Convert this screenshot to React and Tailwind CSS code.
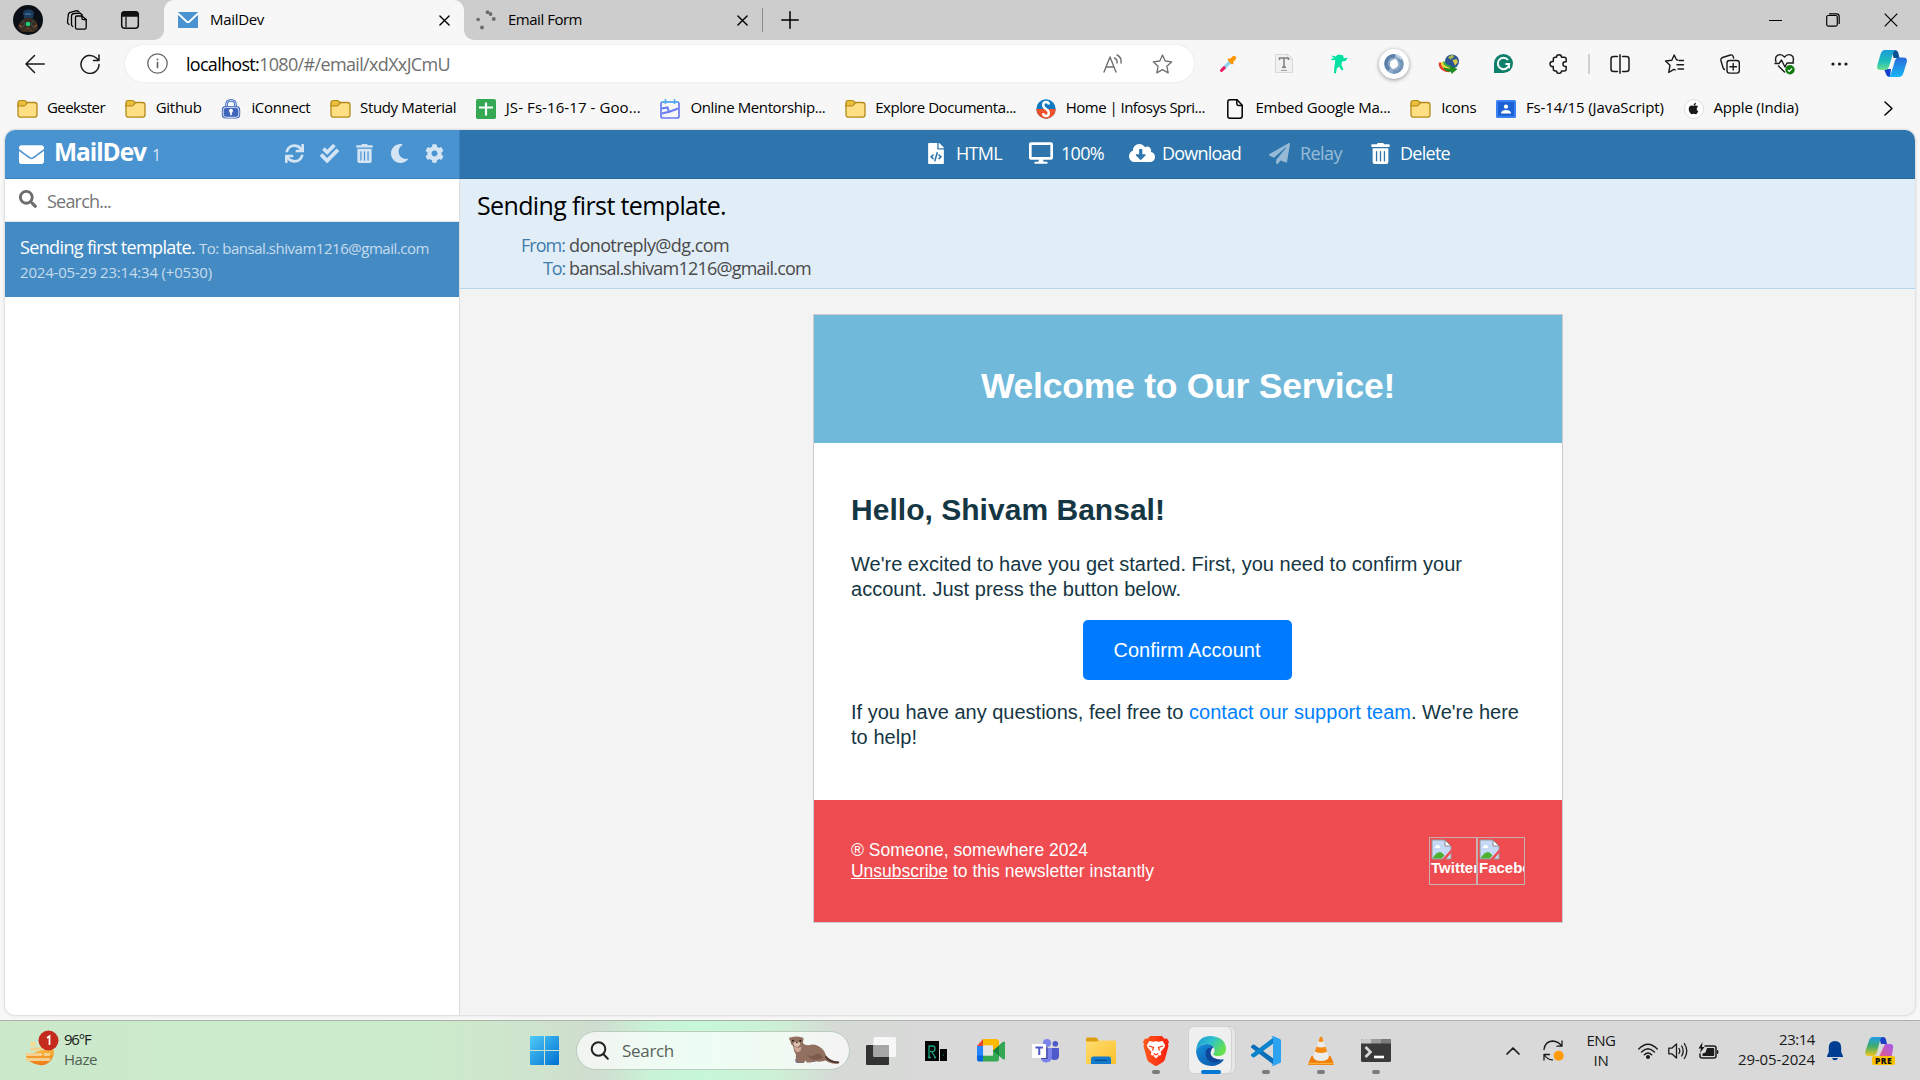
import React, { useLayoutEffect, useRef, useState } from "react";
import {
  FaApple,
  FaCheckDouble,
  FaCloudDownloadAlt,
  FaCog,
  FaDesktop,
  FaEnvelope,
  FaFileCode,
  FaMoon,
  FaPaperPlane,
  FaSearch,
  FaSync,
  FaTrashAlt,
} from "react-icons/fa";

/* A single line of text whose letter spacing is adjusted to fill `w` pixels. */
function Line({ w, className = "", children }) {
  const ref = useRef(null);
  const [style, setStyle] = useState({});
  useLayoutEffect(() => {
    const el = ref.current;
    const natural = el.getBoundingClientRect().width;
    const count = el.textContent.length;
    setStyle({ letterSpacing: `${(w - natural) / count}px`, width: `${w}px` });
  }, [w]);
  return (
    <span ref={ref} style={style} className={`inline-block shrink-0 whitespace-pre ${className}`}>
      {children}
    </span>
  );
}

const stroke = {
  fill: "none",
  stroke: "currentColor",
  strokeWidth: 1.5,
  strokeLinecap: "round",
  strokeLinejoin: "round",
};

/* ---------- browser icons ---------- */

function Avatar() {
  return (
    <svg className="h-[30px] w-[30px]" viewBox="0 0 30 30">
      <circle cx="15" cy="15" r="15" fill="#0b1018" />
      <path d="M10 8c0-4 10-5 11 0l-1 5h-9z" fill="#1c3a5c" />
      <path d="M7 17l5-4h7l5 4 1 7-4 3H9l-4-4z" fill="#3a2c22" />
      <path d="M9 15l3 4-3 4M21 15l-3 4 3 4" stroke="#24584e" fill="none" />
      <path d="M12 9h6" stroke="#3c6fa0" strokeWidth="1.5" />
      <path d="M6 20l3 2M24 20l-3 2" stroke="#a0522d" strokeWidth="1.2" />
      <path d="M12 25l3-2 4 3" stroke="#6a4a28" fill="none" />
      <circle cx="15" cy="19" r="2.2" fill="#1fd07a" />
    </svg>
  );
}

function WorkspacesIcon() {
  return (
    <svg className="h-[22px] w-[22px]" viewBox="0 0 22 22" {...stroke} strokeWidth="1.3">
      <path d="M9.500 8.200 q0-1.200 1.200-1.200 h5.200l4.300 3.600v7.800q0 1.800-1.800 1.800h-7.100q-1.800 0-1.800-1.800z" />
      <path d="M15.900 7v2.300q0 1.400 1.400 1.400h2.900" />
      <path d="M6.800 17.500q-1.300-.5-1.300-2V7.200q0-2.600 2.600-2.700l6.200-.3 2 1.800" />
      <path d="M3 15.500q-1.600-.8-1.500-2.500l.8-7.200q.3-2.300 2.700-2.600l5.800-1.600 2.200 1.300" />
    </svg>
  );
}

function TabActionsIcon() {
  return (
    <svg className="h-5 w-5" viewBox="0 0 20 20">
      <rect x="1.700" y="1.700" width="16.600" height="16.600" rx="3" fill="none" stroke="#111" strokeWidth="1.500" />
      <path d="M1.500 6.800V4q0-2.700 2.700-2.700h11.600q2.700 0 2.700 2.700v2.800z" fill="#111" />
      <path d="M6 6.500v11" stroke="#111" strokeWidth="1.300" />
    </svg>
  );
}

function Cross({ className }) {
  return (
    <svg className={className} viewBox="0 0 12 12" {...stroke}>
      <path d="M1 1l10 10M11 1L1 11" />
    </svg>
  );
}

function FolderIcon() {
  return (
    <svg className="h-5 w-[21px] shrink-0" viewBox="0 0 21 20">
      <rect x="1" y="3.500" width="19" height="14.700" rx="2.500" fill="#ffdf84" stroke="#b38a1a" strokeWidth="1.300" />
      <path d="M1 7V3.800Q1 1.500 3.200 1.500h4q1 0 1.800 1l1.200 1.400L8.600 6Q8 6.800 7 6.800z" fill="#eabf3c" stroke="#b38a1a" strokeWidth="1.200" />
    </svg>
  );
}

function LockIcon() {
  return (
    <svg className="h-5 w-5 shrink-0" viewBox="0 0 20 20">
      <path d="M5.500 9V6q0-4.600 4.500-4.600T14.500 6v3" fill="none" stroke="#4a72bd" strokeWidth="2.800" />
      <path d="M5.500 9V6q0-4.600 4.500-4.600T14.500 6v3" fill="none" stroke="#b9cdf0" strokeWidth="1" />
      <rect x="0.800" y="7" width="18.400" height="12.500" rx="4" fill="#3f66ba" />
      <rect x="2.200" y="8.300" width="15.600" height="10" rx="3" fill="none" stroke="#dbe6fa" strokeWidth="1" />
      <circle cx="10" cy="11.800" r="2" fill="#fff" />
      <path d="M9.200 12h1.600v4.300H9.200z" fill="#fff" />
    </svg>
  );
}

function SheetIcon() {
  return (
    <svg className="h-5 w-5 shrink-0" viewBox="0 0 20 20">
      <rect width="20" height="20" rx="1.800" fill="#34a853" />
      <path d="M10 3.500v13M3 8.500h14" stroke="#fff" strokeWidth="2.200" />
    </svg>
  );
}

function CalendarIcon() {
  return (
    <svg className="h-5 w-5 shrink-0" viewBox="0 0 20 20" fill="none" stroke="#6a7cf5" strokeWidth="1.700">
      <rect x="1" y="3" width="18" height="16" rx="2" />
      <path d="M1.500 3h17" stroke="#5aaef0" />
      <path d="M5.500 0v5M14.500 0v5" stroke="#5aaef0" />
      <path d="M1.500 9.500l6-1 1.500 4.500 9-3.500M2 14.500l6-1.500" strokeWidth="2" />
    </svg>
  );
}

function InfosysIcon() {
  return (
    <svg className="h-5 w-5 shrink-0" viewBox="0 0 20 20">
      <circle cx="10" cy="10" r="9.700" fill="#1278c2" />
      <path d="M.3 10a9.700 9.700 0 0 0 19.400 0z" fill="#f0512a" />
      <path d="M13 5.500Q12.500 3 10 3 7.200 3 7.200 6q0 2.300 2.800 4t2.800 4q0 3-2.800 3-2.600 0-3-2.700" fill="none" stroke="#fff" strokeWidth="2.400" />
    </svg>
  );
}

function PageIcon() {
  return (
    <svg className="h-5 w-4 shrink-0" viewBox="0 0 16 20" {...stroke}>
      <path d="M3 .8h7l5.200 5.400V17q0 2.200-2.200 2.200H3Q.8 19.200.8 17V3Q.8.800 3 .800z" />
      <path d="M9.800 1v3.700q0 1.700 1.700 1.700h3.500" />
    </svg>
  );
}

function ClassroomIcon() {
  return (
    <svg className="h-5 w-5 shrink-0" viewBox="0 0 20 20">
      <rect y="1" width="20" height="18" rx="1.500" fill="#3b80f2" />
      <rect x="2" y="3" width="16" height="14" fill="#1b62d6" />
      <circle cx="10" cy="7.700" r="2.100" fill="#fff" />
      <path d="M5 14.500q0-3.600 5-3.600t5 3.600z" fill="#fff" />
    </svg>
  );
}

function AppleBadge() {
  return (
    <span className="flex h-5 w-5 shrink-0 items-center justify-center rounded-full border border-[#dedede] bg-white">
      <FaApple className="h-[13px] w-[13px] text-[#1a1a1a]" />
    </span>
  );
}

function Eyedropper() {
  return (
    <svg className="h-[17px] w-[17px]" viewBox="0 0 18 18">
      <path d="M2.500 15.500L11 7" stroke="#8fd0f5" strokeWidth="3.600" />
      <path d="M1.600 16.400L4.300 13.700" stroke="#f0185f" strokeWidth="3.200" strokeLinecap="round" />
      <path d="M9.500 5l3.500 3.500" stroke="#fb8c00" strokeWidth="2.600" strokeLinecap="round" />
      <path d="M11.800 6.200l3-3" stroke="#ff9800" strokeWidth="4.600" strokeLinecap="round" />
    </svg>
  );
}

function TextDocIcon() {
  return (
    <svg className="h-[19px] w-[18px]" viewBox="0 0 18 19">
      <path d="M.5.500h12L17.500 5v13.500H.500z" fill="#f1f1f1" stroke="#d8d8d8" />
      <path d="M12.500.500V5h5z" fill="#fff" stroke="#cfcfcf" strokeWidth=".8" />
      <path d="M4.500 6V4h9v2M9 4v9M7 13.200h4" fill="none" stroke="#7d7d7d" strokeWidth="1.500" />
      <path d="M6 16.400h6" stroke="#a8a8a8" strokeWidth="1.200" />
    </svg>
  );
}

function DancerIcon() {
  return (
    <svg className="h-[20px] w-[18px]" viewBox="0 0 18 20" fill="#00e0a0">
      <path d="M1 1.500l4.500 1L8 .5l5 .8.800 3 4-.5-2.200 3.300-3.600.5-.5 3.400 2 4.500-1.800 1-2.700-4-2.300 2.200-.7 4.800-2-.4.300-6L5 9.500 5.200 6 1.800 6.200 1 4.700l3.200-.5z" />
    </svg>
  );
}

function SwirlIcon() {
  return (
    <span className="flex h-[30px] w-[30px] items-center justify-center rounded-full bg-white shadow-[0_1px_4px_rgba(0,0,0,0.4)]">
      <svg className="h-5 w-5" viewBox="0 0 20 20" fill="none">
        <circle cx="10" cy="10" r="7" stroke="#8fabc9" strokeWidth="5.800" />
        <path d="M11 2.200a7.400 7.400 0 0 0-6 13.100" stroke="#5a80a8" strokeWidth="3.400" />
        <path d="M9 17.800a7.400 7.400 0 0 0 6-13.100" stroke="#7394b8" strokeWidth="3" />
        <path d="M12 1.200a9 9 0 0 1 5.500 4" stroke="#c4d3e4" strokeWidth="2" />
        <ellipse cx="10" cy="10" rx="3" ry="5.200" transform="rotate(15 10 10)" fill="#fff" />
      </svg>
    </span>
  );
}

function IdmIcon() {
  return (
    <svg className="h-5 w-[21px]" viewBox="0 0 21 20">
      <circle cx="14" cy="7.500" r="7" fill="#2c568f" />
      <path d="M10 3.500q2-3 5-2.500l1 2-3.500 2.500z" fill="#a9b94e" />
      <path d="M14.500 6l4-1 1.500 3-3 3.500z" fill="#d7c94a" />
      <path d="M2 8.500q-.5 8 9.500 8.500" fill="none" stroke="#e23d28" strokeWidth="2.500" />
      <path d="M4 8q0 6 8.500 7" fill="none" stroke="#f6d423" strokeWidth="2.200" />
      <path d="M6 7.500q0 4 6.500 5" fill="none" stroke="#3bab3a" strokeWidth="2" />
      <path d="M5 13.500l7 1.200.5-2.700 7 3L13.500 20l-.5-2.300q-6 .3-8-4.200z" fill="#1f8a1f" />
    </svg>
  );
}

function GrammarlyIcon() {
  return (
    <svg className="h-[19px] w-[19px]" viewBox="0 0 20 20">
      <path d="M10 0a10 10 0 1 1 0 20H0V10A10 10 0 0 1 10 0z" fill="#0f806c" />
      <path d="M14.800 6.300A6 6 0 1 0 16 10.600h-4M15.800 11v4" fill="none" stroke="#fff" strokeWidth="2" />
    </svg>
  );
}

function PuzzleIcon() {
  return (
    <svg className="h-5 w-5" viewBox="0 0 20 20" {...stroke}>
      <path d="M7.500 3.300a2.500 2.500 0 0 1 5 0h2.700q2 0 2 2v2.500h-1a2.300 2.300 0 0 0 0 4.600h1v2.500q0 2-2 2h-2.700a2.500 2.500 0 0 1-5 0H6.300q-2 0-2-2v-2.300h-.8a2.500 2.500 0 0 1 0-5h.8V5.300q0-2 2-2z" />
    </svg>
  );
}

function SplitIcon() {
  return (
    <svg className="h-5 w-5" viewBox="0 0 20 20" {...stroke}>
      <path d="M7.500 2.500h-4Q1 2.500 1 5v10q0 2.500 2.500 2.500h4M12.500 2.500h4Q19 2.500 19 5v10q0 2.500-2.500 2.500h-4M10 .8v18.400" />
    </svg>
  );
}

function FavoritesIcon() {
  return (
    <svg className="h-5 w-[21px]" viewBox="0 0 20 20" {...stroke} strokeWidth="1.400">
      <path d="M13 6l-1-.2L9.700 1 7.300 6.200 1 7l4.500 4.300-1.300 7L9.500 15.300l1.200.6M14.500 6.500H19M12.500 10.700H19M13.500 15H19" />
    </svg>
  );
}

function CollectionsIcon() {
  return (
    <svg className="h-5 w-5" viewBox="0 0 20 20" {...stroke} strokeWidth="1.400">
      <rect x="7" y="6.500" width="12.300" height="12.600" rx="2.600" />
      <path d="M13.200 9.500v6.600M9.900 12.800h6.600" />
      <path d="M4.500 15.500Q3.300 15 3 13.500L.9 6.500Q.5 4.300 2.500 3.500l8-2.500q2-.5 2.700 1.500l.4 1.500" />
    </svg>
  );
}

function HeartIcon() {
  return (
    <svg className="h-[22px] w-[21px]" viewBox="0 0 21 22">
      <g {...stroke} strokeWidth="1.400">
        <path d="M2 9Q.5 4 3.800 2.200 7.500.5 10.500 4q3-3.500 6.700-1.800Q20.500 4 19 9" />
        <path d="M1 10.500h4l2.500-3.500 3.500 7 2-4h6.500M4.500 13l6 6" />
      </g>
      <circle cx="16" cy="16.700" r="4.700" fill="#0f7b0f" />
      <path d="M13.800 16.800l1.500 1.500 2.800-3" fill="none" stroke="#fff" strokeWidth="1.200" />
    </svg>
  );
}

function CopilotIcon() {
  return (
    <svg className="h-[27px] w-[30px]" viewBox="0 0 30 27">
      <defs>
        <linearGradient id="cpA" x1="0" y1="0" x2="0" y2="1">
          <stop offset="0" stopColor="#1a9bd8" />
          <stop offset=".6" stopColor="#1fc0b8" />
          <stop offset="1" stopColor="#6fe08c" />
        </linearGradient>
        <linearGradient id="cpB" x1="0" y1="0" x2="0" y2="1">
          <stop offset="0" stopColor="#2b6ad8" />
          <stop offset="1" stopColor="#17b6f6" />
        </linearGradient>
      </defs>
      <path d="M15 0h3q2.500 0 3.200 2.500l1.300 5.500h-6z" fill="#0b5394" />
      <path d="M7 19h7l-1 8q-3 0-4-3z" fill="#1440d0" />
      <path d="M8 0h11q-2 0-3 3.500l-4 13Q11 20 8 20H3.500Q-1 20 .4 15L3.600 4Q4.800 0 8 0z" fill="url(#cpA)" />
      <path d="M22 27H11q2 0 3-3.500l4-13Q19 7.500 22 7.500h4.500q4.500 0 3.100 5L26.400 23Q25.200 27 22 27z" fill="url(#cpB)" />
    </svg>
  );
}

/* ---------- browser chrome ---------- */

function TabStrip() {
  return (
    <div className="flex h-10 bg-[#cdcdcd]">
      <div className="flex w-[154px] items-center pl-[13px]">
        <Avatar />
        <span className="ml-[23px]"><WorkspacesIcon /></span>
        <span className="ml-[32px]"><TabActionsIcon /></span>
      </div>
      <div className="flex w-[10px] items-end bg-[#f7f7f7]"><span className="h-10 w-[10px] rounded-br-[10px] bg-[#cdcdcd]" /></div>
      <div className="bg-[#cdcdcd]">
        <div className="flex h-10 w-[300px] items-center rounded-t-[10px] bg-[#f7f7f7] pl-[14px] pr-[14px]">
          <svg className="h-4 w-5" viewBox="0 0 20 16">
            <rect width="20" height="16" rx="1" fill="#4a93d1" />
            <path d="M0 1.500l8.500 8q1.500 1.300 3 0l8.500-8" fill="none" stroke="#fff" strokeWidth="1.800" />
          </svg>
          <Line w={54} className="ml-3 pb-[2px] text-[15px] leading-5 text-black">MailDev</Line>
          <Cross className="ml-auto h-[11px] w-[11px]" />
        </div>
      </div>
      <div className="flex flex-1 bg-[#f7f7f7]">
        <div className="flex flex-1 items-center rounded-bl-[10px] bg-[#cdcdcd] pl-[12px]">
          <svg className="h-5 w-5" viewBox="0 0 20 20" fill="#6b6b6b">
            <circle cx="2.200" cy="9.500" r="1.800" />
            <circle cx="11.500" cy="2.200" r="1.900" />
            <circle cx="14.500" cy="4" r="1.900" />
            <circle cx="17.800" cy="9" r="1.900" />
            <circle cx="6" cy="17.500" r="1.900" />
          </svg>
          <Line w={74} className="ml-[12px] pb-[2px] text-[15px] leading-5 text-black">Email Form</Line>
          <Cross className="ml-[155px] h-[11px] w-[11px]" />
          <span className="ml-[14px] h-6 w-px bg-[#8a8a8a]" />
          <svg className="ml-[18px] h-[18px] w-[18px]" viewBox="0 0 18 18" {...stroke}>
            <path d="M9 .8v16.400M.8 9h16.400" />
          </svg>
          <div className="ml-auto flex items-center pr-[22px] text-black">
            <span className="h-px w-[13px] bg-black" />
            <svg className="ml-[44px] h-[14px] w-[14px]" viewBox="0 0 14 14" fill="none" stroke="currentColor" strokeWidth="1.200">
              <rect x=".7" y="2.500" width="10.600" height="10.600" rx="1.500" />
              <path d="M3 .800h7.500Q13.200.800 13.200 3.500V11" />
            </svg>
            <svg className="ml-[44px] h-[14px] w-[14px]" viewBox="0 0 14 14" fill="none" stroke="currentColor" strokeWidth="1.200">
              <path d="M.7.700l12.600 12.600M13.300.700L.700 13.300" />
            </svg>
          </div>
        </div>
      </div>
    </div>
  );
}

const extensions = [Eyedropper, TextDocIcon, DancerIcon, SwirlIcon, IdmIcon, GrammarlyIcon, PuzzleIcon];

function Slot({ children }) {
  return <span className="flex w-[55px] shrink-0 items-center justify-center">{children}</span>;
}

function AddressRow() {
  return (
    <div className="flex h-[47px] items-center text-[#1a1a1a]">
      <svg className="ml-[25px] h-5 w-5" viewBox="0 0 20 20" {...stroke}>
        <path d="M19.200 10H1M9.500 1.500L1 10l8.500 8.500" />
      </svg>
      <svg className="ml-[35px] h-5 w-5" viewBox="0 0 20 20" {...stroke}>
        <path d="M19 10.500A9 9 0 1 1 16 3.700L18.500 6M19 1v5.500h-5.500" />
      </svg>
      <div className="ml-[25px] flex h-[37px] w-[1069px] items-center rounded-full bg-white pl-[22px] shadow-[0_0_3px_rgba(0,0,0,0.08)]">
        <svg className="h-[21px] w-[21px] text-[#666]" viewBox="0 0 21 21" {...stroke} strokeWidth="1.300">
          <circle cx="10.500" cy="10.500" r="9.700" />
          <path d="M10.500 9.500v5M10.500 6.300v.3" strokeWidth="1.700" />
        </svg>
        <span className="ml-[18px] flex text-lg leading-6">
          <Line w={73} className="text-black">localhost:</Line>
          <Line w={191} className="text-[#6f6f6f]">1080/#/email/xdXxJCmU</Line>
        </span>
        <svg className="ml-auto h-[19px] w-5 text-[#6f6f6f]" viewBox="0 0 20 19" {...stroke} strokeWidth="1.400">
          <path d="M1 18L7 3l6 15M3 13h8M11.500 4q3 1.500 2.500 5M14 1q5 2.500 4 8" />
        </svg>
        <svg className="mr-[21px] ml-[29px] h-5 w-[21px] text-[#6f6f6f]" viewBox="0 0 21 20" {...stroke} strokeWidth="1.300">
          <path d="M10.500 1l2.700 6 6.600.8-4.900 4.500 1.300 6.600-5.700-3.300-5.700 3.300 1.300-6.600L1.200 7.800l6.600-.8z" />
        </svg>
      </div>
      <div className="ml-[7px] flex items-center">
        {extensions.map((Icon, i) => (
          <Slot key={i}><Icon /></Slot>
        ))}
        <span className="mr-[2px] ml-[2px] h-5 w-[2px] bg-[#d0d0d0]" />
        <Slot><SplitIcon /></Slot>
        <Slot><FavoritesIcon /></Slot>
        <Slot><CollectionsIcon /></Slot>
        <Slot><HeartIcon /></Slot>
        <Slot>
          <svg className="h-1 w-[17px]" viewBox="0 0 17 4" fill="#1a1a1a">
            <circle cx="2" cy="2" r="1.600" />
            <circle cx="8.500" cy="2" r="1.600" />
            <circle cx="15" cy="2" r="1.600" />
          </svg>
        </Slot>
        <span className="ml-[10px]"><CopilotIcon /></span>
      </div>
    </div>
  );
}

const bookmarks = [
  [FolderIcon, "Geekster", 58, "gap-[9px]"],
  [FolderIcon, "Github", 46, "gap-[10px]"],
  [LockIcon, "iConnect", 59, "gap-[10px]"],
  [FolderIcon, "Study Material", 96, "gap-[9px]"],
  [SheetIcon, "JS- Fs-16-17 - Goo...", 135, "gap-[10px]"],
  [CalendarIcon, "Online Mentorship...", 135, "gap-[10px]"],
  [FolderIcon, "Explore Documenta...", 141, "gap-[9px]"],
  [InfosysIcon, "Home | Infosys Spri...", 139, "gap-[10px]"],
  [PageIcon, "Embed Google Ma...", 135, "gap-[13px] pl-[2px]"],
  [FolderIcon, "Icons", 35, "gap-[10px]"],
  [ClassroomIcon, "Fs-14/15 (JavaScript)", 138, "gap-[10px]"],
  [AppleBadge, "Apple (India)", 85, "gap-[10px]"],
];

function BookmarksBar() {
  return (
    <div className="flex h-[43px] items-center gap-[19.7px] pl-[17px] text-black">
      {bookmarks.map(([Icon, label, w, gap]) => (
        <span key={label} className={`flex items-center ${gap}`}>
          <Icon />
          <Line w={w} className="pb-[3px] text-[15px] leading-5">{label}</Line>
        </span>
      ))}
      <svg className="mr-[27px] ml-auto h-[15px] w-[9px]" viewBox="0 0 9 15" {...stroke}>
        <path d="M1 1l7 6.500L1 14" />
      </svg>
    </div>
  );
}

/* ---------- MailDev ---------- */

function Sidebar() {
  return (
    <aside className="flex w-[455px] shrink-0 flex-col border-r border-[#dcdcdc] bg-white">
      <header className="-mr-px flex h-[49px] items-center border-r border-b border-[#3a82bf] bg-[#4a93d1] pl-[14px] text-white">
        <FaEnvelope className="h-[25px] w-[25px]" />
        <Line w={92} className="ml-[10px] pb-[4px] text-[24.5px] leading-8 font-bold">MailDev</Line>
        <Line w={7} className="ml-[6px] pt-[2px] text-[16px] leading-5 text-[#d3e5f5]">1</Line>
        <span className="ml-auto flex items-center pr-[15px] pb-px text-[#d3e5f5]">
          <FaSync className="h-[19px] w-[19px]" />
          <FaCheckDouble className="ml-4 h-[19px] w-[19px]" />
          <FaTrashAlt className="ml-4 h-[19px] w-[19px]" />
          <FaMoon className="ml-4 h-[19px] w-[19px]" />
          <FaCog className="ml-4 h-[19px] w-[19px]" />
        </span>
      </header>
      <div className="flex h-[43px] items-center border-b border-[#e3e3e3] pl-[14px]">
        <FaSearch className="mb-[3px] h-[18px] w-[18px] text-[#6c6c6c]" />
        <Line w={64} className="ml-[10px] pt-[2px] text-[18px] leading-6 text-[#757575]">Search...</Line>
      </div>
      <div className="h-[75px] bg-[#458bc3] pt-[13px] pl-[15px]">
        <div className="flex items-baseline leading-6">
          <Line w={175} className="text-[18px] text-white">Sending first template.</Line>
          <Line w={230} className="ml-[4px] text-[15px] text-[#c5dcee]">To: bansal.shivam1216@gmail.com</Line>
        </div>
        <Line w={192} className="-mt-px text-[15px] leading-6 text-[#c5dcee]">2024-05-29 23:14:34 (+0530)</Line>
      </div>
    </aside>
  );
}

function BrokenImage({ alt }) {
  return (
    <span className="flex h-12 w-12 flex-col overflow-hidden border border-[#c9b0b0] pt-px pl-px">
      <svg className="h-[21px] w-[21px] shrink-0" viewBox="0 0 21 21">
        <path d="M1 1h13l6 6v13H1z" fill="#c6d9f7" stroke="#9a9a9a" strokeWidth="1" />
        <path d="M14 1v6h6z" fill="#fff" stroke="#8a8a8a" strokeWidth="1" />
        <path d="M4 9q0-3 3-3 2 0 2 3z" fill="#fff" />
        <path d="M1.500 19.500q5-8 9-6l3 3-3 3z" fill="#4caf2e" />
        <path d="M11 20.500L20.500 10v3.500L14.500 20.500z" fill="#ee4c50" />
      </svg>
      <span className="-mt-[2px] text-[15px] leading-5 font-bold whitespace-nowrap">{alt}</span>
    </span>
  );
}

function EmailPreview() {
  return (
    <div className="mt-[25px] ml-[353px] w-[750px] border border-[#cccccc] bg-white font-['Liberation_Sans',Arial,sans-serif] text-[#153643]">
      <div className="flex h-[128px] justify-center bg-[#70b9da] pt-[48px] text-white">
        <Line w={414} className="text-[35.5px] leading-[46px] font-bold">Welcome to Our Service!</Line>
      </div>
      <div className="h-[357px] px-[37px] pt-[48px]">
        <Line w={314} className="text-[30px] leading-[38px] font-bold">Hello, Shivam Bansal!</Line>
        <p className="mt-[23px] text-[20px] leading-[25px]">
          <Line w={611}>We're excited to have you get started. First, you need to confirm your</Line>
          <Line w={330}>account. Just press the button below.</Line>
        </p>
        <div className="mt-[18px] mr-[2px] flex justify-center">
          <span className="flex h-[60px] w-[209px] items-center justify-center rounded-[5px] bg-[#007bff] text-white">
            <Line w={147} className="text-[20px] leading-6">Confirm Account</Line>
          </span>
        </div>
        <p className="mt-[20px] text-[20px] leading-[25px]">
          <Line w={338}>If you have any questions, feel free to </Line>
          <Line w={222} className="text-[#0080ff]">contact our support team</Line>
          <Line w={108}>. We're here</Line>
          <br />
          <Line w={66}>to help!</Line>
        </p>
      </div>
      <div className="flex h-[122px] items-center bg-[#ee4c50] px-[37px] text-white">
        <div className="flex-1 text-[17.5px] leading-[21px]">
          <Line w={237}>® Someone, somewhere 2024</Line>
          <div className="flex">
            <Line w={97} className="underline">Unsubscribe</Line>
            <Line w={206}> to this newsletter instantly</Line>
          </div>
        </div>
        <div className="flex">
          <BrokenImage alt="Twitter" />
          <BrokenImage alt="Facebook" />
        </div>
      </div>
    </div>
  );
}

function Mail() {
  return (
    <div className="mx-[5px] flex h-[885px] overflow-hidden rounded-[10px] bg-[#f3f3f3] shadow-[0_0_3px_rgba(0,0,0,0.25)]">
      <Sidebar />
      <main className="min-w-0 flex-1">
        <header className="flex h-[49px] items-center border-b border-[#2a699c] bg-[#2d75ac] pb-[2px] pl-[467px] text-[18px] leading-6 text-white">
          <FaFileCode className="h-[21px] w-[18px]" />
          <Line w={46} className="ml-[11px]">HTML</Line>
          <FaDesktop className="ml-[27px] h-[24px] w-[24px]" />
          <Line w={43} className="ml-[8px]">100%</Line>
          <FaCloudDownloadAlt className="ml-[25px] h-[26px] w-[26px]" />
          <Line w={79} className="ml-[7px]">Download</Line>
          <span className="flex items-center opacity-50">
            <FaPaperPlane className="ml-[28px] h-[21px] w-[21px]" />
            <Line w={42} className="ml-[10px]">Relay</Line>
          </span>
          <FaTrashAlt className="ml-[28px] h-[21px] w-[21px]" />
          <Line w={50} className="ml-[9px]">Delete</Line>
        </header>
        <section className="h-[110px] border-b border-[#b5d5ec] bg-[#e1edf7] pt-[8px] pl-[17px]">
          <Line w={249} className="text-[25px] leading-[36px] text-black">Sending first template.</Line>
          <div className="grid grid-cols-[88px_auto] gap-x-[4px] pt-[11px] text-[18px] leading-[23px]">
            <span className="flex justify-end text-[#3f7cab]"><Line w={44}>From:</Line></span>
            <span className="text-[#4a4a4a]"><Line w={160}>donotreply@dg.com</Line></span>
            <span className="flex justify-end text-[#3f7cab]"><Line w={22}>To:</Line></span>
            <span className="text-[#4a4a4a]"><Line w={242}>bansal.shivam1216@gmail.com</Line></span>
          </div>
        </section>
        <EmailPreview />
      </main>
    </div>
  );
}

/* ---------- taskbar ---------- */

function WeatherIcon() {
  return (
    <svg className="h-[38px] w-[34px]" viewBox="0 0 34 38">
      <defs>
        <linearGradient id="sun" x1="0" y1="0" x2="0" y2="1">
          <stop offset="0" stopColor="#f7b63c" />
          <stop offset="1" stopColor="#ee7a1a" />
        </linearGradient>
      </defs>
      <path d="M16 20h13q.5 7-4 11.500T14.500 35 4 31q-2-2-3-5z" fill="url(#sun)" />
      <path d="M5.500 14h5" stroke="#f8d98a" strokeWidth="3.500" />
      <path d="M6.500 19h10M2 24.500h14M2 29.500h22M20 24.500h4" stroke="#f3d08d" strokeWidth="2.800" strokeLinecap="round" />
      <circle cx="23.500" cy="10.500" r="10" fill="#c42b1c" />
      <path d="M22 8l2.500-1.800V15" fill="none" stroke="#fff" strokeWidth="1.700" />
    </svg>
  );
}

function StartIcon() {
  return (
    <svg className="h-[29px] w-[29px]" viewBox="0 0 29 29">
      <defs>
        <linearGradient id="win" x1="0" y1="0" x2="1" y2="1">
          <stop offset="0" stopColor="#4fcbfb" />
          <stop offset="1" stopColor="#0070d0" />
        </linearGradient>
      </defs>
      <path d="M1 0h13v14H0V1q0-1 1-1zM15 0h13q1 0 1 1v13H15zM0 15h14v14H1q-1 0-1-1zM15 15h14v13q0 1-1 1H15z" fill="url(#win)" />
    </svg>
  );
}

function OtterIcon() {
  return (
    <svg className="h-[30px] w-[52px]" viewBox="0 0 52 30">
      <path d="M8 22q-2 4 1 5h7l1-4zM20 22l-2 4h9l2-3z" fill="#6f6a92" />
      <path d="M1 3Q1 1 3.500 1.300 5 .600 8.500.600T13 1.300q3 0 2.500 2L14.800 7q2 2.500 6 2.200 4-1.700 8.500.300Q35 12 37 17q1.500 5 6 7.300 4 1.700 8 1.200 1.200 1.200-1.500 2-7 .8-12-3-5 2-11 .5l-3.500 1.500h-4l-1-2-3 2h-5q-3-3-2-8Q5.500 15 5 10 2 7.500 2.500 5z" fill="#92705f" />
      <path d="M6 10q4 3 7.500.5-.2 5.500-3.700 5.500T6 10z" fill="#d0a698" />
      <path d="M5.300 7q3.500-3 7 0-.5 3.800-3.500 3.800T5.300 7z" fill="#dcc3b3" />
      <path d="M7.500 5.800h2.700L8.800 7.500z" fill="#2b1a16" />
      <circle cx="5" cy="4.700" r=".9" fill="#1e1210" />
      <circle cx="12.300" cy="4.700" r=".9" fill="#1e1210" />
      <path d="M17 17q5 5 10 2 5-4 8 3-5 3-12 1z" fill="#7c5b4e" />
      <path d="M38 21q3 4.500 12 5.500" fill="none" stroke="#4e3530" strokeWidth="2" strokeLinecap="round" />
    </svg>
  );
}

function TaskViewIcon() {
  return (
    <svg className="h-[28px] w-[30px]" viewBox="0 0 30 28">
      <rect y="8" width="23" height="20" rx="1" fill="#333" />
      <rect x="7.500" y="0" width="22.500" height="20" rx="1.500" fill="#f7f7f7" />
      <path d="M7.500 8H23v12H7.500z" fill="#a6a6a6" />
    </svg>
  );
}

function RIcon() {
  return (
    <svg className="h-5 w-[22px]" viewBox="0 0 22 20">
      <path d="M0 0h14v20H0zM15 8h7v12h-7z" fill="#050505" />
      <path d="M4 16V5h3.500q2.500 0 2.500 2.800T7.500 10.600H5M7 11l3 5M3 16.500h3M9 16.500h2" fill="none" stroke="#18a383" strokeWidth="1.300" />
      <circle cx="18.500" cy="14" r=".6" fill="#18a383" />
    </svg>
  );
}

function MeetIcon() {
  return (
    <svg className="h-[23px] w-7" viewBox="0 0 28 23">
      <path d="M0 7h6v10H0z" fill="#2684fc" />
      <path d="M6 0v7H0z" fill="#ea4335" />
      <path d="M6 0h13q3 0 3 2.500v6L16 12V6.500H6z" fill="#ffba00" />
      <path d="M6 16.500h10V11l6 4v5q0 2.500-2.500 2.500H6z" fill="#34a853" />
      <path d="M0 16.500h6v6H2q-2 0-2-2z" fill="#0066da" />
      <path d="M6.500 6.500h9.500v10H6.500z" fill="#e6e6e6" />
      <path d="M16 11.500L26 3q2-1 2 1v15q0 2-2 1z" fill="#188038" />
      <path d="M22 6.500L26 3q2-1 2 1v15q0 2-2 1l-4-3.500z" fill="#34a853" />
    </svg>
  );
}

function TeamsIcon() {
  return (
    <svg className="h-6 w-[27px]" viewBox="0 0 27 24">
      <circle cx="15" cy="4" r="4" fill="#7b83eb" />
      <circle cx="23.300" cy="4.800" r="2.800" fill="#5059c9" />
      <path d="M19 9h7q1 0 1 1v6.500q0 4.500-4.500 4.500-2 0-3.500-1z" fill="#5059c9" />
      <path d="M9 9h11v8q0 6.500-6 6.500-4 0-5-4z" fill="#7b83eb" />
      <path d="M9 19.500h6V8" fill="none" stroke="#444a9c" strokeWidth="1.200" />
      <rect y="5" width="14" height="14" rx="1" fill="#fff" />
      <path d="M3.500 8.500h7.500M7.250 8.500v7.500" stroke="#5059c9" strokeWidth="2" />
    </svg>
  );
}

function ExplorerIcon() {
  return (
    <svg className="h-[27px] w-[30px]" viewBox="0 0 30 27">
      <defs>
        <linearGradient id="exp" x1="0" y1="0" x2="1" y2="1">
          <stop offset="0" stopColor="#ffdc70" />
          <stop offset="1" stopColor="#fdc02c" />
        </linearGradient>
      </defs>
      <path d="M0 6V2Q0 .500 1.500.500h8q1 0 1.700 1L13 4v2z" fill="#dd9f10" />
      <path d="M0 4.500h11l2-1h16q1 0 1 1V26q0 1-1 1H1q-1 0-1-1z" fill="url(#exp)" />
      <path d="M5 27v-5q0-2.500 2.500-2.500h15q2.500 0 2.500 2.500v5z" fill="#1379cc" />
      <path d="M9 23.300h12" stroke="#0b4f8c" strokeWidth="1.300" />
    </svg>
  );
}

function BraveIcon() {
  return (
    <svg className="h-[30px] w-[26px]" viewBox="0 0 26 30">
      <defs>
        <linearGradient id="brv" x1="0" x2="1">
          <stop offset="0" stopColor="#ff5a1c" />
          <stop offset="1" stopColor="#fa1e0e" />
        </linearGradient>
      </defs>
      <path d="M7 0h12l2.500 2.800 2.500-.3 2 3.500-1 2 .5 2-3.500 13q-.5 2-2 3l-5.500 3.500q-1.500.8-3 0L6 26q-1.500-1-2-3L.500 10 1 8 0 6l2-3.500 2.500.3z" fill="url(#brv)" />
      <path d="M13 5.200l3 .5 3.600-.6 2.600 4.200-.8 2.200-3.800 4.500.7 2.400-1.500 1.300-2.200-1.300.9 1.700-2.500 2.400-2.500-2.400.9-1.700-2.200 1.300-1.500-1.300.7-2.400-3.800-4.500-.8-2.200 2.600-4.200 3.600.6z" fill="#fff" />
      <path d="M6 10l4.500 1.500-1 3M20 10l-4.500 1.500 1 3M10.800 17.500L13 18.800l2.200-1.300" fill="none" stroke="#fb3a12" strokeWidth="1.300" />
    </svg>
  );
}

function EdgeIcon() {
  return (
    <svg className="h-[30px] w-[30px]" viewBox="0 0 30 30">
      <defs>
        <linearGradient id="edA" x1="0" y1="0" x2="1" y2=".5">
          <stop offset="0" stopColor="#1c94d8" />
          <stop offset=".5" stopColor="#2cc0cf" />
          <stop offset="1" stopColor="#66e04e" />
        </linearGradient>
        <linearGradient id="edB" x1="0" y1="0" x2="1" y2="1">
          <stop offset="0" stopColor="#1590dc" />
          <stop offset="1" stopColor="#0a50a5" />
        </linearGradient>
      </defs>
      <path d="M0 15Q1 0 15 0q14 1 15 12.500 0 7.500-7.500 7.500-5.500 0-5.300-2.300Q19 16 18.500 13.500 17 8.500 10 8 4 8 0 15z" fill="url(#edA)" />
      <path d="M0 15Q3 8.500 10 8q5 0 7.500 3Q11 10.500 10.500 17q.5 8 9.500 8.500 4-.3 7-2.300 1 0 .5 1Q23 30 15 30 1 29 0 15z" fill="url(#edB)" />
      <path d="M17.500 11Q10 10 9.500 17.500q.5 8.500 9 9 4.500-.3 8.500-3.300-5 1-9.500-1.500-4-3-2.500-7 1-2.500 2.500-3.700z" fill="#10469a" />
    </svg>
  );
}

function VsCodeIcon() {
  return (
    <svg className="h-[30px] w-[30px]" viewBox="0 0 30 30">
      <path d="M0 11.500q-.5-.8.300-1.500l1.500-1.300q.8-.6 1.600 0L23 23v6z" fill="#0a6eb8" />
      <path d="M0 18.500q-.5.800.3 1.500l1.500 1.300q.8.600 1.600 0L23 7V1z" fill="#0a82cc" />
      <path d="M22 0l7 3q1 .5 1 1.500v21q0 1-1 1.500l-7 3q-1 0-1.500-1 1.500.5 1.500-1.500V2.500Q22 .500 20.500 1q.5-1 1.500-1z" fill="#2ba3f0" />
    </svg>
  );
}

function VlcIcon() {
  return (
    <svg className="h-[29px] w-[26px]" viewBox="0 0 26 29">
      <path d="M3.500 20h19L26 28q0 1-1 1H1q-1 0-1-1z" fill="#f07c0a" />
      <path d="M12 .800h2L21 21q-1.500 4-8 4t-8-4z" fill="#ececec" />
      <path d="M12 .800h2l1.500 4.500q-2.500 1.500-5 0zM8.600 10.500q4.400 2 8.800 0l1.800 5q-6.200 3-12.400 0z" fill="#f58a14" />
      <path d="M0 27.500h26" stroke="#ffb03a" strokeWidth="1.500" />
    </svg>
  );
}

function TerminalIcon() {
  return (
    <svg className="h-[23px] w-[30px]" viewBox="0 0 30 23">
      <rect width="30" height="23" rx="1.500" fill="#3a3a3a" />
      <path d="M1.500 0H10v4.500H0V1.500Q0 0 1.500 0z" fill="#c9c9c9" />
      <path d="M10 0h10v4.500H10z" fill="#9b9b9b" />
      <path d="M20 0h8.500Q30 0 30 1.500v3H20z" fill="#7b7b7b" />
      <path d="M4.500 8l5 5-5 5" fill="none" stroke="#d8d8d8" strokeWidth="2.600" />
      <path d="M13 18h10" stroke="#fff" strokeWidth="2.600" />
    </svg>
  );
}

function AppSlot({ icon: Icon, running, active }) {
  return (
    <span className="relative flex h-[59px] w-[55px] items-center justify-center">
      {active && (
        <>
          <span className="absolute top-[5px] left-[12px] h-[48px] w-[41px] rounded-[6px] border border-[#cfcfcf] bg-[#e6e6e6]" />
          <span className="absolute top-[5px] left-[5px] h-[48px] w-[44px] rounded-[6px] border border-[#d2d2d2] bg-[#efefef]" />
          <span className="absolute top-[49px] left-[18px] h-1 w-5 rounded-full bg-[#0078d4]" />
        </>
      )}
      {running && <span className="absolute top-[49px] left-[24px] h-1 w-2 rounded-full bg-[#7b7b7b]" />}
      <span className="relative"><Icon /></span>
    </span>
  );
}

function SystemTray() {
  return (
    <div className="ml-auto flex items-center text-[15px] leading-5 text-[#1a1a1a]">
      <svg className="h-2 w-[14px]" viewBox="0 0 14 8" {...stroke} strokeWidth="1.700">
        <path d="M1 7l6-6 6 6" />
      </svg>
      <svg className="ml-[23px] h-[21px] w-[21px]" viewBox="0 0 21 21">
        <g {...stroke} strokeWidth="1.300">
          <path d="M1 9.500Q2 1.500 9.500 1q6 .3 9 5M19 1v5.200h-5M1 20v-5.500h5.500M1.500 15q3 5 8 4.800" />
        </g>
        <circle cx="15.700" cy="15.700" r="5" fill="#ff9a0a" />
      </svg>
      <div className="ml-[22px] flex w-[30px] flex-col items-center pb-[2px]">
        <Line w={29}>ENG</Line>
        <Line w={15}>IN</Line>
      </div>
      <svg className="ml-[22px] h-4 w-5" viewBox="0 0 20 16" {...stroke} strokeWidth="1.400">
        <path d="M.8 6Q10-3.500 19.200 6M3.500 9q6.500-6.500 13 0M6.300 11.800q3.700-3.500 7.400 0" />
        <circle cx="10" cy="14" r="1.300" fill="currentColor" />
      </svg>
      <svg className="ml-[10px] h-[18px] w-5" viewBox="0 0 20 18" {...stroke} strokeWidth="1.300">
        <path d="M.8 6.200h3L8.500 2v14l-4.700-4.200h-3zM11 6.500q1.600 2.500 0 5M13.700 4q3 5 0 10M16.300 1.500q5 7.500 0 15" />
      </svg>
      <svg className="ml-[10px] h-[17px] w-[21px]" viewBox="0 0 21 17">
        <path d="M7 4h9q2 0 2 2v8q0 2-2 2H4q-2 0-2-2v-2" {...stroke} />
        <path d="M9 6h6.500q.7 0 .7.700v6.600q0 .7-.7.700H4.500l0-2.500 3-1z" fill="currentColor" />
        <path d="M19 8h.500q1 .5 1 2t-1 2H19z" fill="currentColor" />
        <path d="M4.500 0L.500 6.500H3L2 11l4.500-6H4z" fill="currentColor" />
      </svg>
      <div className="ml-[19px] flex w-[77px] flex-col items-end pb-[4px]">
        <Line w={36}>23:14</Line>
        <Line w={77}>29-05-2024</Line>
      </div>
      <svg className="ml-[12px] h-5 w-4" viewBox="0 0 16 20" fill="#003e92">
        <path d="M8 0q6.200.3 6.200 6.500v4.500L16 15v1H0v-1l1.800-4V6.500Q1.800.300 8 0zM5 17h6q-.7 2.300-3 2.300T5 17z" />
      </svg>
      <svg className="mr-[25px] ml-[22px] h-7 w-[30px]" viewBox="0 0 30 28">
        <defs>
          <linearGradient id="ctA" x1="0" y1="0" x2="0" y2="1">
            <stop offset="0" stopColor="#1f9bea" />
            <stop offset=".5" stopColor="#3fae6a" />
            <stop offset="1" stopColor="#f5c81c" />
          </linearGradient>
          <linearGradient id="ctB" x1="0" y1="1" x2="1" y2="0">
            <stop offset="0" stopColor="#ee5a7a" />
            <stop offset="1" stopColor="#a25cf0" />
          </linearGradient>
        </defs>
        <path d="M14 0h4q2 0 2.800 2L22 7h-6z" fill="#1c3fc4" />
        <path d="M8 0h10q-2 0-3 3.500L12 15q-1 4-4 4H3.500Q-.500 19 .500 14L4 3.500Q5 0 8 0z" fill="url(#ctA)" />
        <path d="M20 7h5q4 0 3 4.500L27 18q-1 4-4 4H13z" fill="url(#ctB)" />
        <rect x="7" y="19" width="23" height="9" rx="2" fill="#fcc200" />
        <text x="18.500" y="26.500" textAnchor="middle" fontSize="8.500" fontWeight="800" fill="#111" letterSpacing=".4" fontFamily="Open Sans, sans-serif">PRE</text>
      </svg>
    </div>
  );
}

const apps = [
  [TaskViewIcon],
  [RIcon],
  [MeetIcon],
  [TeamsIcon],
  [ExplorerIcon],
  [BraveIcon, true],
  [EdgeIcon, false, true],
  [VsCodeIcon, true],
  [VlcIcon, true],
  [TerminalIcon, true],
];

function Taskbar() {
  return (
    <footer className="flex h-[60px] items-center border-t border-[#a9b3aa] bg-[linear-gradient(90deg,#cbe8cb_0%,#ccebcc_22%,#cfe2cd_29%,#d0dccf_31%,#c8f3d6_34%,#c6f8d8_36.500%,#cdf0d4_40.500%,#d6dad6_43.500%,#d9d9d9_50%,#d9d9d9_100%)]">
      <div className="flex w-[530px] items-center pl-[25px]">
        <span className="pb-[3px]"><WeatherIcon /></span>
        <div className="ml-[5px] flex flex-col pb-[4px] text-[15px] leading-5">
          <Line w={30} className="text-[#1a1a1a]">96°F</Line>
          <Line w={33} className="text-[#4f5f52]">Haze</Line>
        </div>
      </div>
      <StartIcon />
      <div className="ml-[17px] flex h-[39px] w-[274px] items-center rounded-full border border-[#b9ccbd] bg-white/70 pr-[9px] pl-[13px]">
        <svg className="h-[19px] w-[19px] text-[#222]" viewBox="0 0 19 19" {...stroke} strokeWidth="2">
          <circle cx="8.500" cy="8" r="6.800" />
          <path d="M13.300 13l4.500 4.800" />
        </svg>
        <Line w={52} className="ml-[13px] text-[17px] leading-6 text-[#58625a]">Search</Line>
        <span className="ml-auto"><OtterIcon /></span>
      </div>
      <div className="ml-[3px] flex">
        {apps.map(([Icon, running, active], i) => (
          <AppSlot key={i} icon={Icon} running={running} active={active} />
        ))}
      </div>
      <SystemTray />
    </footer>
  );
}

export default function App() {
  return (
    <div className="flex h-[1080px] w-[1920px] flex-col overflow-hidden bg-[#f7f7f7] font-['Open_Sans','Noto_Sans',sans-serif]">
      <TabStrip />
      <AddressRow />
      <BookmarksBar />
      <Mail />
      <div className="h-[5px]" />
      <Taskbar />
    </div>
  );
}
